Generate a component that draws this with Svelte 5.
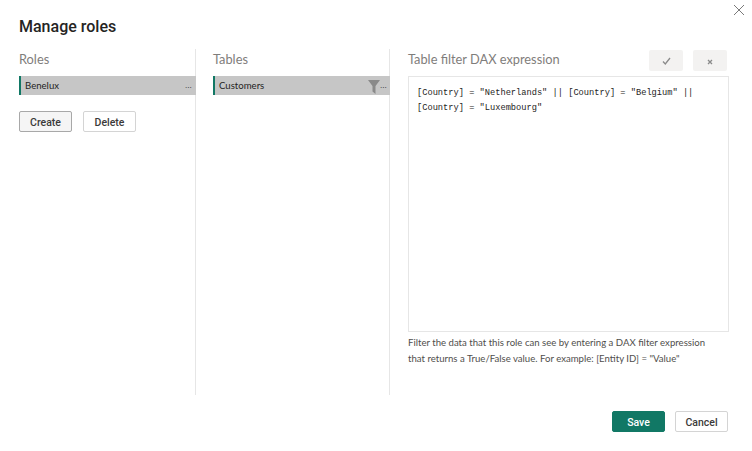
<script>
  let roles = ["Benelux"]
  let tables = ["Customers"]
</script>

<div class="dialog">
  <button class="close" aria-label="Close">
    <svg width="12" height="12" viewBox="0 0 12 12"><path d="M1 1l10 10M11 1L1 11" stroke="#7a7a7a" stroke-width="1" fill="none"/></svg>
  </button>
  <h1>Manage roles</h1>
  <div class="columns">
    <section class="col">
      <h2>Roles</h2>
      {#each roles as role}
        <div class="row"><span>{role}</span><span class="more">...</span></div>
      {/each}
      <div class="actions">
        <button class="btn focus">Create</button>
        <button class="btn">Delete</button>
      </div>
    </section>
    <section class="col">
      <h2>Tables</h2>
      {#each tables as table}
        <div class="row">
          <span>{table}</span>
          <svg class="funnel" width="12" height="14" viewBox="0 0 12 14"><path d="M0 0h12L7.5 6v8L4.5 11.5V6z" fill="#8a8a8a"/></svg>
          <span class="more tight">...</span>
        </div>
      {/each}
    </section>
    <section class="editor">
      <div class="editor-head">
        <h2>Table filter DAX expression</h2>
        <div class="tools">
          <button class="tool" aria-label="Confirm">
            <svg width="9" height="8" viewBox="0 0 9 8"><path d="M1 4.5L3.3 7 8 1" stroke="#8a8a8a" stroke-width="1.3" fill="none"/></svg>
          </button>
          <button class="tool" aria-label="Discard">
            <svg width="6" height="6" viewBox="0 0 6 6"><path d="M1 1l4 4M5 1L1 5" stroke="#8a8a8a" stroke-width="1.3" fill="none"/></svg>
          </button>
        </div>
      </div>
      <div class="code">[Country] = "Netherlands" || [Country] = "Belgium" ||<br>[Country] = "Luxembourg"</div>
      <p class="hint">Filter the data that this role can see by entering a DAX filter expression<br>that returns a True/False value. For example: [Entity ID] = "Value"</p>
    </section>
  </div>
  <footer>
    <button class="btn save">Save</button>
    <button class="btn cancel">Cancel</button>
  </footer>
</div>

<style>
  :global(body) {
    margin: 0;
    background: #fff;
  }

  .dialog {
    position: relative;
    width: 752px;
    height: 451px;
    box-sizing: border-box;
    padding: 15px 23px 0 19px;
    font-family: Lato, Roboto, sans-serif;
    color: #252423;
    overflow: hidden;
  }

  .close {
    position: absolute;
    top: 4px;
    right: 7px;
    padding: 0;
    border: none;
    background: none;
    line-height: 0;
  }

  h1 {
    margin: 0;
    font-family: Roboto, sans-serif;
    font-size: 16px;
    line-height: 24px;
    font-weight: 500;
  }

  h2 {
    margin: 0;
    font-size: 12.8px;
    line-height: 20px;
    font-weight: 400;
    color: #7f7d7b;
  }

  .columns {
    display: flex;
    margin-top: 10px;
    height: 346px;
  }

  .col {
    width: 177px;
    box-sizing: border-box;
    margin-right: 17px;
    padding-top: 0;
    border-right: 1px solid #e6e6e6;
  }

  .col + .col {
    margin-right: 18px;
  }

  .col h2 {
    margin-bottom: 7px;
  }

  .row {
    display: flex;
    align-items: center;
    height: 19px;
    box-sizing: border-box;
    padding-left: 4px;
    margin-right: -1px;
    background: #c6c6c6;
    border-left: 2px solid #117865;
    font-size: 9.6px;
    color: #252423;
  }

  .more {
    margin-left: auto;
    margin-right: 4px;
    font-family: Roboto, sans-serif;
    font-size: 9px;
    line-height: 9px;
  }

  .funnel {
    margin-left: auto;
    margin-top: 3px;
  }

  .more.tight {
    margin-left: 0;
    margin-right: 3px;
  }

  .actions {
    display: flex;
    gap: 11px;
    margin-top: 16px;
  }

  .btn {
    height: 21px;
    box-sizing: border-box;
    padding: 1px 0 0 0;
    border: 1px solid #d4d4d4;
    border-radius: 2px;
    background: #fff;
    font-family: Roboto, sans-serif;
    font-size: 10.5px;
    font-weight: 500;
    color: #3b3a39;
    width: 53px;
  }

  .focus {
    background: #f5f5f5;
    border-color: #a8a8a8;
  }

  .editor {
    width: 321px;
    display: flex;
    flex-direction: column;
  }

  .editor-head {
    display: flex;
    justify-content: space-between;
    height: 27px;
  }

  .tools {
    display: flex;
    gap: 10px;
    margin-top: 1px;
    margin-right: 2px;
  }

  .tool {
    width: 34px;
    height: 21px;
    padding: 0;
    border: none;
    border-radius: 2px;
    background: #f3f2f1;
  }

  .code {
    height: 256px;
    box-sizing: border-box;
    padding: 9px 8px;
    border: 1px solid #e6e6e6;
    font-family: "Liberation Mono", monospace;
    font-size: 8.7px;
    font-weight: 400;
    line-height: 15px;
    color: #252423;
  }

  .hint {
    margin: 0;
    padding-top: 3px;
    font-size: 9.6px;
    line-height: 16px;
    color: #504e4c;
  }

  footer {
    display: flex;
    justify-content: flex-end;
    gap: 10px;
    margin-top: 16px;
    margin-right: 1px;
  }

  .save {
    background: #117865;
    border-color: #117865;
    color: #fff;
  }

  .cancel {
    color: #3b3a39;
  }
</style>
